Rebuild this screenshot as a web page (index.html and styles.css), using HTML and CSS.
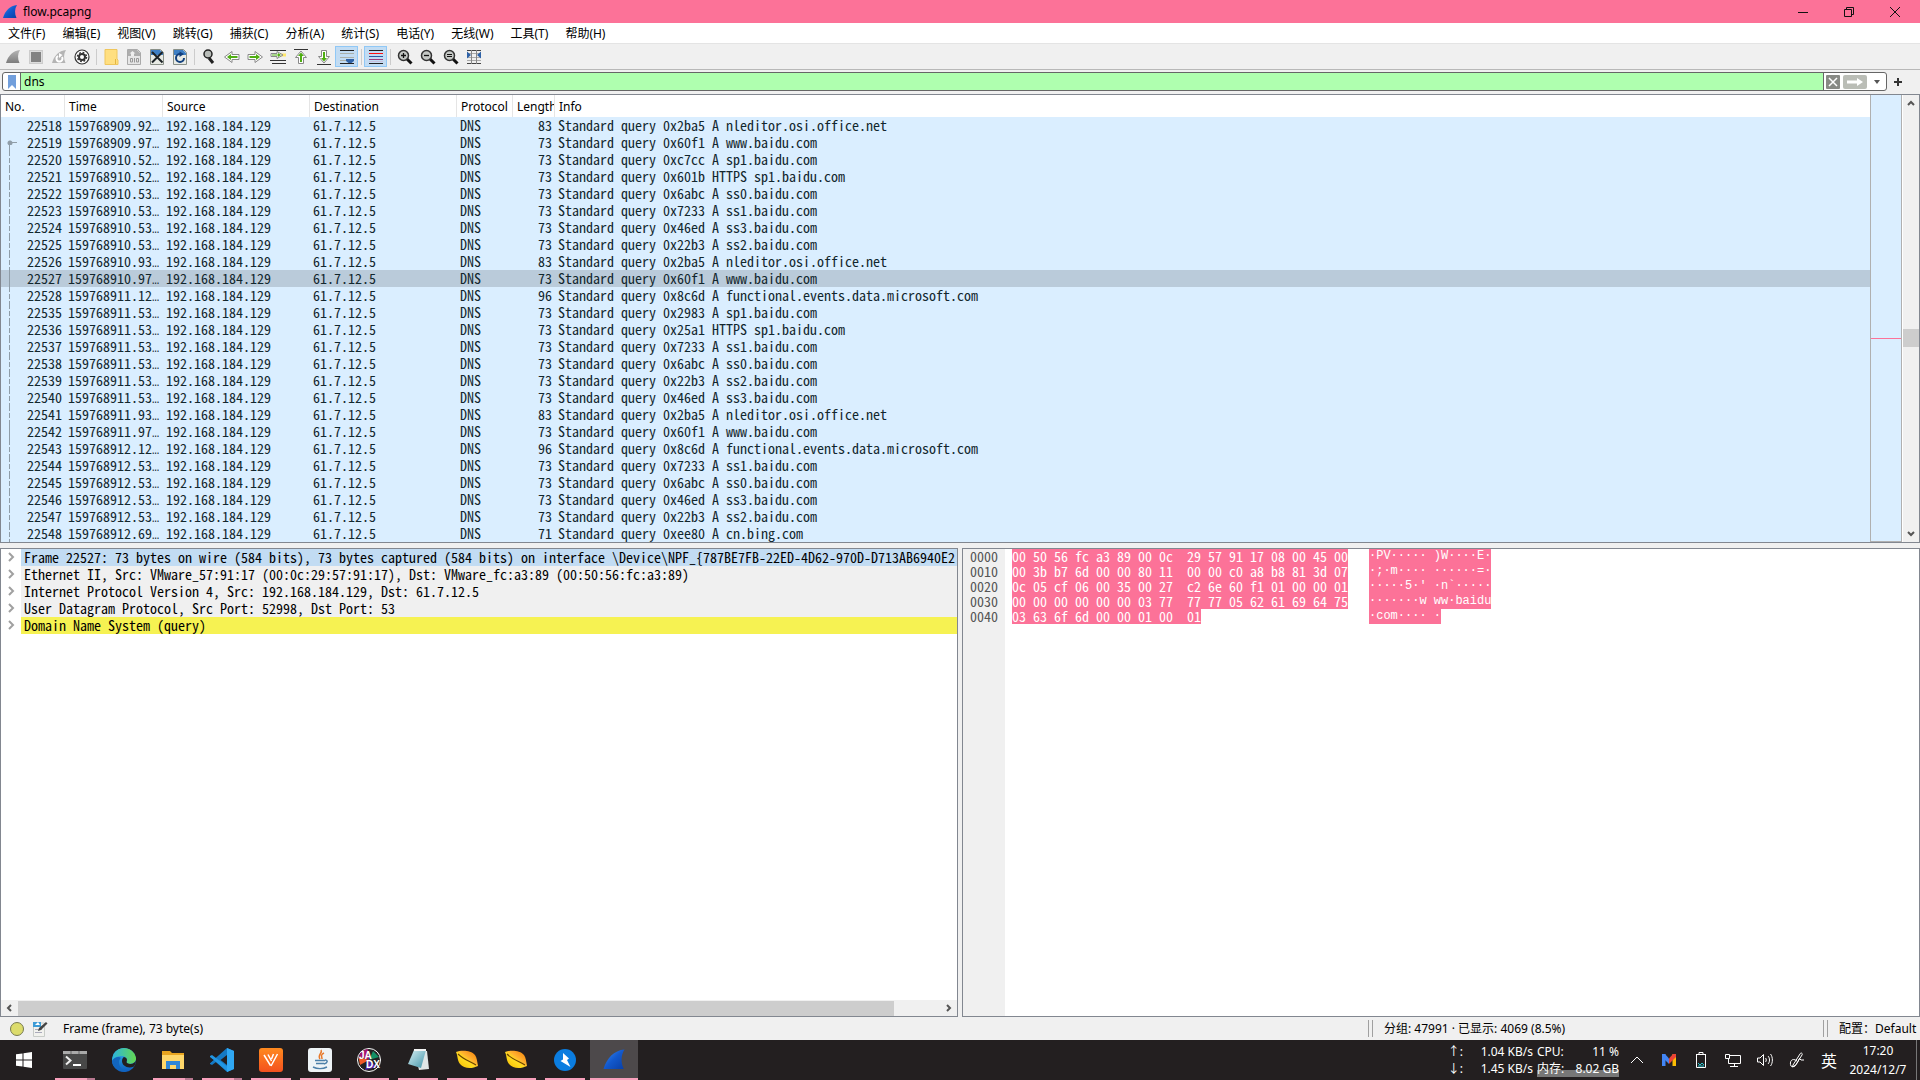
FILE: index.html
```html
<!DOCTYPE html>
<html lang="zh-CN">
<head>
<meta charset="utf-8">
<title>flow.pcapng</title>
<link rel="stylesheet" href="styles.css">
</head>
<body>
<svg width="0" height="0" class="defs" aria-hidden="true">
  <defs>
    <linearGradient id="blueFin" x1="0" y1="0" x2="1" y2="1"><stop offset="0" stop-color="#3f8cf0"/><stop offset=".5" stop-color="#1258cc"/><stop offset="1" stop-color="#0a3fa4"/></linearGradient>
    <linearGradient id="greyFin" x1="0" y1="0" x2="0" y2="1"><stop offset="0" stop-color="#b5b5b5"/><stop offset="1" stop-color="#7d7d7d"/></linearGradient>
    <linearGradient id="edgeBlue" x1="0" y1="0" x2="0" y2="1"><stop offset="0" stop-color="#35b8e8"/><stop offset="1" stop-color="#0d5cc0"/></linearGradient>
    <linearGradient id="edgeGreen" x1="0" y1="0" x2="1" y2="0"><stop offset="0" stop-color="#2ab5e0"/><stop offset="1" stop-color="#65d84f"/></linearGradient>
    <linearGradient id="orange" x1="0" y1="0" x2="0" y2="1"><stop offset="0" stop-color="#ff8a1f"/><stop offset="1" stop-color="#f4511e"/></linearGradient>
    <linearGradient id="leaf" x1="1" y1="0" x2="0" y2="1"><stop offset="0" stop-color="#f07800"/><stop offset=".4" stop-color="#ffb030"/><stop offset=".55" stop-color="#ffdc20"/><stop offset="1" stop-color="#f5b800"/></linearGradient>
    <linearGradient id="glass" x1="0" y1="0" x2="1" y2="1"><stop offset="0" stop-color="#d8f0f4"/><stop offset="1" stop-color="#3f93a8"/></linearGradient>
    <symbol id="fin" viewBox="0 0 16 16"><path d="M1 14C3 7 8 1.500 15 1C12.500 5 12.500 9.500 14.500 14Z" /></symbol>
    <symbol id="leafIcon" viewBox="0 0 24 24"><path d="M1 4C6 2 16 2 20 7C22 10 22 13 23 18C17 21 9 21 5 16C2 12 3 8 1 4Z" fill="url(#leaf)"/><path d="M3 6C8 11 14 13 21 17" fill="none" stroke="#6a4300" stroke-width="1.200"/></symbol>
    <symbol id="arrowR" viewBox="0 0 16 16"><path d="M1 5.500H8V2.500L15.500 8L8 13.500V10.500H1Z" fill="#fff" stroke="#888" stroke-width="1"/><path d="M2.500 7H9V5L13 8L9 11V9H2.500Z" fill="#4fae12"/></symbol>
    <symbol id="lens" viewBox="0 0 16 16"><path d="M10 10L14.500 14.500" stroke="#111" stroke-width="3"/><circle cx="6.500" cy="6.500" r="5" fill="#c5c8c5" stroke="#333" stroke-width="1.500"/></symbol>
  </defs>
</svg>
<div class="app">
  <header class="titlebar">
    <svg class="i16" viewBox="0 0 16 16"><use href="#fin" fill="url(#blueFin)"/></svg>
    <h1>flow.pcapng</h1>
    <div class="window-buttons">
      <button aria-label="最小化"><svg class="i10" viewBox="0 0 10 10"><path d="M0 5.500H10"/></svg></button>
      <button aria-label="还原"><svg class="i10" viewBox="0 0 10 10"><path d="M.5 2.500H7.500V9.500H.5ZM2.500 2.500V.5H9.500V7.500H7.500"/></svg></button>
      <button aria-label="关闭"><svg class="i10" viewBox="0 0 10 10"><path d="M0 0L10 10M10 0L0 10"/></svg></button>
    </div>
  </header>
  <nav class="menubar">
    <button>文件(F)</button><button>编辑(E)</button><button>视图(V)</button><button>跳转(G)</button><button>捕获(C)</button><button>分析(A)</button><button>统计(S)</button><button>电话(Y)</button><button>无线(W)</button><button>工具(T)</button><button>帮助(H)</button>
  </nav>
  <div class="toolbar">
    <button aria-label="开始捕获"><svg class="i16" viewBox="0 0 16 16"><use href="#fin" fill="url(#greyFin)"/></svg></button>
    <button aria-label="停止捕获"><svg class="i16" viewBox="0 0 16 16"><rect x="1.500" y="1.500" width="13" height="13" fill="#ddd" stroke="#ccc"/><rect x="3" y="3" width="10" height="10" fill="#828282"/></svg></button>
    <button aria-label="重新开始"><svg class="i16" viewBox="0 0 16 16"><use href="#fin" fill="#b4b4b4"/><path d="M7 7A3 3 0 1 0 11 8" fill="none" stroke="#fff" stroke-width="2"/><path d="M8 4V9L11.500 6Z" fill="#fff"/></svg></button>
    <button aria-label="捕获选项"><svg class="i16" viewBox="0 0 16 16"><circle cx="8" cy="8" r="7" fill="#fff" stroke="#333" stroke-width="1.200"/><circle cx="8" cy="8" r="3" fill="none" stroke="#333" stroke-width="2"/><circle cx="8" cy="8" r="4.500" fill="none" stroke="#333" stroke-width="1.500" stroke-dasharray="1.770 1.770"/></svg></button>
    <i class="sep"></i>
    <button aria-label="打开"><svg class="i16" viewBox="0 0 16 16"><path d="M2 .5H14V10L15 11V15.500H2Z" fill="#ffdf80" stroke="#efc65c"/><path d="M12.500 10V15" stroke="#e4b740"/></svg></button>
    <button aria-label="保存"><svg class="i16" viewBox="0 0 16 16"><path d="M1.500 .5H11.500L14.500 3.500V15.500H1.500Z" fill="#e6e6e6" stroke="#aaa"/><path d="M2 1H11L14 4V7H2Z" fill="#adadad"/><path d="M5 7V4.500H3.500L6.500 2L9.500 4.500H8V7Z" fill="#eee"/><path d="M4.500 9.500H6.500V13H4.500ZM8.500 9V13.500M10.500 9.500H12.500V13H10.500Z" fill="none" stroke="#999"/></svg></button>
    <button aria-label="关闭文件"><svg class="i16" viewBox="0 0 16 16"><path d="M1.500 .5H11.500L14.500 3.500V15.500H1.500Z" fill="#e8ebe5" stroke="#8a9088"/><path d="M2 1H11L14 4V6H2Z" fill="#3e7fc4"/><path d="M3 3L13.500 13.500M13.500 3L3 13.500" stroke="#1c2226" stroke-width="2"/></svg></button>
    <button aria-label="重新加载"><svg class="i16" viewBox="0 0 16 16"><path d="M1.500 .5H11.500L14.500 3.500V15.500H1.500Z" fill="#e8ebe5" stroke="#8a9088"/><path d="M2 1H11L14 4V6H2Z" fill="#3e7fc4"/><path d="M8 5A4 4 0 1 0 12 9" fill="none" stroke="#123f7c" stroke-width="2"/><path d="M7.500 2.500L12 5L7.500 8Z" fill="#123f7c"/></svg></button>
    <i class="sep"></i>
    <button aria-label="查找"><svg class="i16" viewBox="0 0 16 16"><path d="M8 9L12 14" stroke="#222" stroke-width="3"/><circle cx="7" cy="5" r="4" fill="#b9bdb9" stroke="#222" stroke-width="1.500"/></svg></button>
    <button aria-label="后退"><svg class="i16 flip" viewBox="0 0 16 16"><use href="#arrowR"/></svg></button>
    <button aria-label="前进"><svg class="i16" viewBox="0 0 16 16"><use href="#arrowR"/></svg></button>
    <button aria-label="转到分组"><svg class="i16" viewBox="0 0 16 16"><path d="M0 1.500H16M0 11.500H16M2 14.500H16" stroke="#333"/><path d="M11 4.500H16V7.500H11" fill="#ffe76a"/><path d="M1 4.500H7V2.500L13 6L7 9.500V7.500H1Z" fill="#fff" stroke="#888"/><path d="M2 5.500H8V4L11 6L8 8V6.500H2Z" fill="#4fae12"/></svg></button>
    <button aria-label="首个分组"><svg class="i16" viewBox="0 0 16 16"><path d="M1 .5H15" stroke="#333"/><path d="M5.500 14.500V8.500H2.500L8 2L13.500 8.500H10.500V14.500Z" fill="#fff" stroke="#888"/><path d="M7 13V7H5L8 3.500L11 7H9V13Z" fill="#4fae12"/></svg></button>
    <button aria-label="最新分组"><svg class="i16" viewBox="0 0 16 16"><path d="M1 15.500H15" stroke="#333"/><path d="M5.500 1.500V7.500H2.500L8 14L13.500 7.500H10.500V1.500Z" fill="#fff" stroke="#888"/><path d="M7 3V9H5L8 12.500L11 9H9V3Z" fill="#4fae12"/></svg></button>
    <button class="on" aria-label="自动滚动"><svg class="i16" viewBox="0 0 16 16"><path d="M1 1.500H15M1 14.500H15" stroke="#222"/><path d="M1 4.500H15M1 8.500H15M1 11.500H8" stroke="#aab0aa"/><path d="M7 10H15V12L12.500 14H9.500L7 12Z" fill="#2e62a8"/></svg></button>
    <i class="sep"></i>
    <button class="on" aria-label="着色"><svg class="i16" viewBox="0 0 16 16"><path d="M1 1.500H15M1 14.500H15" stroke="#222"/><path d="M1 4.500H15" stroke="#ff1010"/><path d="M1 7.500H15" stroke="#2c5aa0"/><path d="M1 10.500H15" stroke="#9a3f7b"/><path d="M1 12.500H15" stroke="#c9c0dc"/></svg></button>
    <i class="sep"></i>
    <button aria-label="放大"><svg class="i16" viewBox="0 0 16 16"><use href="#lens"/><path d="M4 6.500H9M6.500 4V9" stroke="#111" stroke-width="1.300"/></svg></button>
    <button aria-label="缩小"><svg class="i16" viewBox="0 0 16 16"><use href="#lens"/><path d="M4 6.500H9" stroke="#111" stroke-width="1.300"/></svg></button>
    <button aria-label="原始大小"><svg class="i16" viewBox="0 0 16 16"><use href="#lens"/><path d="M4 5.500H9M4 7.500H9" stroke="#111"/></svg></button>
    <button aria-label="调整列宽"><svg class="i16" viewBox="0 0 16 16"><path d="M1 1.500H15M1 14.500H15" stroke="#444" stroke-dasharray="4 1"/><path d="M1 4.500H15M1 8.500H15M1 11.500H15" stroke="#aaa"/><path d="M5.500 1V15M10.500 1V15" stroke="#888"/><path d="M1 2.500L5 6L1 9.500ZM15 2.500L11 6L15 9.500Z" fill="#2e62a8"/></svg></button>
  </div>
  <div class="filterbar">
    <div class="filterbox">
      <button class="bookmark" aria-label="书签"><svg width="10" height="14" viewBox="0 0 10 14"><path d="M1 0H9V14L5 10L1 14Z" fill="#729fdc"/></svg></button>
      <input type="text" value="dns" aria-label="显示过滤器">
      <button class="clear" aria-label="清除"><svg width="14" height="14" viewBox="0 0 14 14"><rect width="14" height="14" rx="1" fill="#888a85"/><path d="M3 3L11 11M11 3L3 11" stroke="#fff" stroke-width="1.500"/></svg></button>
      <button class="apply" aria-label="应用"><svg width="24" height="14" viewBox="0 0 24 14"><rect width="24" height="14" rx="2" fill="#babdb6"/><path d="M4 5.500H14V3L20 7L14 11V8.500H4Z" fill="#fff"/></svg></button>
      <button class="drop" aria-label="历史"><svg width="6" height="4" viewBox="0 0 6 4"><path d="M0 0H6L3 4Z" fill="#555"/></svg></button>
    </div>
    <button class="plus" aria-label="添加"><svg width="8" height="8" viewBox="0 0 8 8"><path d="M0 4H8M4 0V8" stroke="#333" stroke-width="2"/></svg></button>
  </div>
  <main class="panes">
    <section class="packets frame">
      <div class="list">
        <table>
          <colgroup><col class="c-no"><col class="c-time"><col class="c-addr"><col class="c-addr"><col class="c-proto"><col class="c-len"><col></colgroup>
          <thead><tr><th>No.</th><th>Time</th><th>Source</th><th>Destination</th><th>Protocol</th><th>Length</th><th>Info</th></tr></thead>
          <tbody>
            <tr><td>22518</td><td>159768909.92<span>…</span></td><td>192.168.184.129</td><td>61.7.12.5</td><td>DNS</td><td>83</td><td>Standard query 0x2ba5 A nleditor.osi.office.net</td></tr>
            <tr class="first"><td>22519</td><td>159768909.97<span>…</span></td><td>192.168.184.129</td><td>61.7.12.5</td><td>DNS</td><td>73</td><td>Standard query 0x60f1 A www.baidu.com</td></tr>
            <tr class="rel"><td>22520</td><td>159768910.52<span>…</span></td><td>192.168.184.129</td><td>61.7.12.5</td><td>DNS</td><td>73</td><td>Standard query 0xc7cc A sp1.baidu.com</td></tr>
            <tr class="rel"><td>22521</td><td>159768910.52<span>…</span></td><td>192.168.184.129</td><td>61.7.12.5</td><td>DNS</td><td>73</td><td>Standard query 0x601b HTTPS sp1.baidu.com</td></tr>
            <tr class="rel"><td>22522</td><td>159768910.53<span>…</span></td><td>192.168.184.129</td><td>61.7.12.5</td><td>DNS</td><td>73</td><td>Standard query 0x6abc A ss0.baidu.com</td></tr>
            <tr class="rel"><td>22523</td><td>159768910.53<span>…</span></td><td>192.168.184.129</td><td>61.7.12.5</td><td>DNS</td><td>73</td><td>Standard query 0x7233 A ss1.baidu.com</td></tr>
            <tr class="rel"><td>22524</td><td>159768910.53<span>…</span></td><td>192.168.184.129</td><td>61.7.12.5</td><td>DNS</td><td>73</td><td>Standard query 0x46ed A ss3.baidu.com</td></tr>
            <tr class="rel"><td>22525</td><td>159768910.53<span>…</span></td><td>192.168.184.129</td><td>61.7.12.5</td><td>DNS</td><td>73</td><td>Standard query 0x22b3 A ss2.baidu.com</td></tr>
            <tr class="rel"><td>22526</td><td>159768910.93<span>…</span></td><td>192.168.184.129</td><td>61.7.12.5</td><td>DNS</td><td>83</td><td>Standard query 0x2ba5 A nleditor.osi.office.net</td></tr>
            <tr class="same selected"><td>22527</td><td>159768910.97<span>…</span></td><td>192.168.184.129</td><td>61.7.12.5</td><td>DNS</td><td>73</td><td>Standard query 0x60f1 A www.baidu.com</td></tr>
            <tr class="rel"><td>22528</td><td>159768911.12<span>…</span></td><td>192.168.184.129</td><td>61.7.12.5</td><td>DNS</td><td>96</td><td>Standard query 0x8c6d A functional.events.data.microsoft.com</td></tr>
            <tr class="rel"><td>22535</td><td>159768911.53<span>…</span></td><td>192.168.184.129</td><td>61.7.12.5</td><td>DNS</td><td>73</td><td>Standard query 0x2983 A sp1.baidu.com</td></tr>
            <tr class="rel"><td>22536</td><td>159768911.53<span>…</span></td><td>192.168.184.129</td><td>61.7.12.5</td><td>DNS</td><td>73</td><td>Standard query 0x25a1 HTTPS sp1.baidu.com</td></tr>
            <tr class="rel"><td>22537</td><td>159768911.53<span>…</span></td><td>192.168.184.129</td><td>61.7.12.5</td><td>DNS</td><td>73</td><td>Standard query 0x7233 A ss1.baidu.com</td></tr>
            <tr class="rel"><td>22538</td><td>159768911.53<span>…</span></td><td>192.168.184.129</td><td>61.7.12.5</td><td>DNS</td><td>73</td><td>Standard query 0x6abc A ss0.baidu.com</td></tr>
            <tr class="rel"><td>22539</td><td>159768911.53<span>…</span></td><td>192.168.184.129</td><td>61.7.12.5</td><td>DNS</td><td>73</td><td>Standard query 0x22b3 A ss2.baidu.com</td></tr>
            <tr class="rel"><td>22540</td><td>159768911.53<span>…</span></td><td>192.168.184.129</td><td>61.7.12.5</td><td>DNS</td><td>73</td><td>Standard query 0x46ed A ss3.baidu.com</td></tr>
            <tr class="rel"><td>22541</td><td>159768911.93<span>…</span></td><td>192.168.184.129</td><td>61.7.12.5</td><td>DNS</td><td>83</td><td>Standard query 0x2ba5 A nleditor.osi.office.net</td></tr>
            <tr class="same"><td>22542</td><td>159768911.97<span>…</span></td><td>192.168.184.129</td><td>61.7.12.5</td><td>DNS</td><td>73</td><td>Standard query 0x60f1 A www.baidu.com</td></tr>
            <tr class="rel"><td>22543</td><td>159768912.12<span>…</span></td><td>192.168.184.129</td><td>61.7.12.5</td><td>DNS</td><td>96</td><td>Standard query 0x8c6d A functional.events.data.microsoft.com</td></tr>
            <tr class="rel"><td>22544</td><td>159768912.53<span>…</span></td><td>192.168.184.129</td><td>61.7.12.5</td><td>DNS</td><td>73</td><td>Standard query 0x7233 A ss1.baidu.com</td></tr>
            <tr class="rel"><td>22545</td><td>159768912.53<span>…</span></td><td>192.168.184.129</td><td>61.7.12.5</td><td>DNS</td><td>73</td><td>Standard query 0x6abc A ss0.baidu.com</td></tr>
            <tr class="rel"><td>22546</td><td>159768912.53<span>…</span></td><td>192.168.184.129</td><td>61.7.12.5</td><td>DNS</td><td>73</td><td>Standard query 0x46ed A ss3.baidu.com</td></tr>
            <tr class="rel"><td>22547</td><td>159768912.53<span>…</span></td><td>192.168.184.129</td><td>61.7.12.5</td><td>DNS</td><td>73</td><td>Standard query 0x22b3 A ss2.baidu.com</td></tr>
            <tr class="rel"><td>22548</td><td>159768912.69<span>…</span></td><td>192.168.184.129</td><td>61.7.12.5</td><td>DNS</td><td>71</td><td>Standard query 0xee80 A cn.bing.com</td></tr>
          </tbody>
        </table>
      </div>
      <div class="minimap"><i></i></div>
      <div class="vscroll">
        <svg width="8" height="6" viewBox="0 0 8 6"><path d="M1 5L4 2L7 5"/></svg>
        <div class="vtrack"><i></i></div>
        <svg width="8" height="6" viewBox="0 0 8 6"><path d="M1 1L4 4L7 1"/></svg>
      </div>
    </section>
    <div class="lower">
      <section class="details frame">
        <ul>
          <li class="current"><svg width="20" height="10" viewBox="0 0 20 10"><path d="M8 1L12 5L8 9"/></svg><span>Frame 22527: 73 bytes on wire (584 bits), 73 bytes captured (584 bits) on interface \Device\NPF_{787BE7FB-22ED-4D62-970D-D713AB6940E2</span></li>
          <li><svg width="20" height="10" viewBox="0 0 20 10"><path d="M8 1L12 5L8 9"/></svg><span>Ethernet II, Src: VMware_57:91:17 (00:0c:29:57:91:17), Dst: VMware_fc:a3:89 (00:50:56:fc:a3:89)</span></li>
          <li><svg width="20" height="10" viewBox="0 0 20 10"><path d="M8 1L12 5L8 9"/></svg><span>Internet Protocol Version 4, Src: 192.168.184.129, Dst: 61.7.12.5</span></li>
          <li><svg width="20" height="10" viewBox="0 0 20 10"><path d="M8 1L12 5L8 9"/></svg><span>User Datagram Protocol, Src Port: 52998, Dst Port: 53</span></li>
          <li class="match"><svg width="20" height="10" viewBox="0 0 20 10"><path d="M8 1L12 5L8 9"/></svg><span>Domain Name System (query)</span></li>
        </ul>
        <div class="hscroll">
          <svg width="6" height="8" viewBox="0 0 6 8"><path d="M5 1L2 4L5 7"/></svg>
          <div class="htrack"><i></i></div>
          <svg width="6" height="8" viewBox="0 0 6 8"><path d="M1 1L4 4L1 7"/></svg>
        </div>
      </section>
      <section class="bytes frame">
        <pre class="offsets">0000
0010
0020
0030
0040</pre>
        <pre class="hex"><mark>00 50 56 fc a3 89 00 0c  29 57 91 17 08 00 45 00</mark>
<mark>00 3b b7 6d 00 00 80 11  00 00 c0 a8 b8 81 3d 07</mark>
<mark>0c 05 cf 06 00 35 00 27  c2 6e 60 f1 01 00 00 01</mark>
<mark>00 00 00 00 00 00 03 77  77 77 05 62 61 69 64 75</mark>
<mark>03 63 6f 6d 00 00 01 00  01</mark></pre>
        <pre class="ascii"><mark>·PV····· )W····E·</mark>
<mark>·;·m···· ······=·</mark>
<mark>·····5·' ·n`·····</mark>
<mark>·······w ww·baidu</mark>
<mark>·com···· ·</mark></pre>
      </section>
    </div>
  </main>
  <footer class="status">
    <div class="st-left">
      <svg class="i16" viewBox="0 0 16 16"><circle cx="8" cy="8" r="6.500" fill="#dcdc6c" stroke="#777a50"/></svg>
      <svg class="i16" viewBox="0 0 16 16"><path d="M1.500 2H12.500V15.500H1.500Z" fill="#f2f2ee" stroke="#c8ccc8"/><path d="M1 1H9V6H1Z" fill="#3d9bd6"/><path d="M3 4L6 1L8 4" fill="#fff"/><path d="M3 8.500H10M3 11.500H10" stroke="#aab"/><path d="M6 10L7 7L14 1L15.500 2.500L9 9Z" fill="#444"/></svg>
      <span>Frame (frame), 73 byte(s)</span>
    </div>
    <div class="st-mid">分组: 47991 · 已显示: 4069 (8.5%)</div>
    <div class="st-right">配置：Default</div>
  </footer>
  <div class="taskbar">
    <button aria-label="开始"><svg width="16" height="16" viewBox="0 0 16 16"><path d="M0 2.300L6.500 1.400V7.500H0ZM7.500 1.200L16 0V7.500H7.500ZM0 8.500H6.500V14.600L0 13.700ZM7.500 8.500H16V16L7.500 14.800Z" fill="#fff"/></svg></button>
    <button class="run multi" aria-label="终端"><svg class="i24" viewBox="0 0 24 24"><rect y="3" width="24" height="18" rx="1" fill="#484848"/><path d="M0 3H24V6H0Z" fill="#a9a9a9"/><path d="M8 3V6M16 3V6" stroke="#666"/><path d="M3 8.500L7.500 12.500L3 16.500" fill="none" stroke="#eee" stroke-width="2"/><path d="M10 17H18" stroke="#fff" stroke-width="2"/></svg></button>
    <button aria-label="Edge"><svg class="i24" viewBox="0 0 24 24"><circle cx="12" cy="12" r="12" fill="url(#edgeBlue)"/><path d="M1 8C4-2 21-3 24 10C24.500 16 17 17 14.500 15C16 13 15 8 10 8C5 8 2 10 0 13Z" fill="url(#edgeGreen)"/><path d="M15 15C19 17 23 15.500 24 12C24 15 23 17 22 18.500C16 21 10 18 10 13C10 11 11 9.500 12 9C16 10 15 13 14.500 14Z" fill="#231f20"/><path d="M9 10C5 13 7 22 15 23.500C9 25 0 20 0 13C2 9 7 8 9 10Z" fill="#1265bd"/></svg></button>
    <button class="run multi" aria-label="文件资源管理器"><svg class="i24" viewBox="0 0 24 24"><path d="M1 3H9L11 5H23V21H1Z" fill="#e9a520"/><path d="M1 7H23V21H1Z" fill="#ffd76a"/><path d="M5 13H19V21H15V17H9V21H5Z" fill="#2f87d8"/></svg></button>
    <button class="run multi" aria-label="Visual Studio Code"><svg class="i24" viewBox="0 0 24 24"><path d="M17 0L24 3V21L17 24L6 14L2 17L0 16V15L17 0" fill="#1479c4"/><path d="M0 8L2 7L18 19V24L0 9Z" fill="#2196e3"/><path d="M17 0L24 3V21L17 24Z" fill="#30a8f3"/><path d="M17 7V17L10.500 12Z" fill="#231f20"/><path d="M0 10L3.500 12L0 15Z" fill="#231f20"/></svg></button>
    <button class="run" aria-label="Yakit"><svg class="i24" viewBox="0 0 24 24"><rect width="24" height="24" rx="3" fill="url(#orange)"/><path d="M5 7L11.500 17.500M9 6.500L12.500 13M18.500 6L12 18M14.500 6L12.500 11" fill="none" stroke="#fff" stroke-width="1.500"/></svg></button>
    <button class="run" aria-label="Java"><svg class="i24" viewBox="0 0 24 24"><rect width="24" height="24" rx="3" fill="#eef3f6"/><path d="M13 2C15 5 9 7 12 11M16 5C12 7 14 8 14 11" fill="none" stroke="#e8792b" stroke-width="1.500"/><path d="M7 12.500H17M8 15.500H16M5 19C9 21 15 21 19 19M17 12C20 12 20 15 16 16" fill="none" stroke="#4c7fa8" stroke-width="1.500"/></svg></button>
    <button class="run" aria-label="JADX"><svg class="i24" viewBox="0 0 24 24"><circle cx="12" cy="12" r="11.500" fill="#222" stroke="#fff"/><path d="M12 12L2 8A11 11 0 0 1 11 1Z" fill="#a3146f"/><path d="M12 12L1.500 9L3 17Z" fill="#ef5a28"/><path d="M12 12L16 3L22 9Z" fill="#139065"/><path d="M12 12L8 22L20 19Z" fill="#5025a8"/><text x="2" y="11" class="logo-text">JA</text><text x="9" y="20" class="logo-text">DX</text></svg></button>
    <button class="run" aria-label="记事本"><svg class="i24" viewBox="0 0 24 24"><path d="M8 2L21 3L23 21L13 22Z" fill="#dfe6e6"/><path d="M8 2L20 2L15 20L2 16Z" fill="url(#glass)"/><path d="M8 2H20" stroke="#f4f4f4" stroke-width="2"/></svg></button>
    <button class="run" aria-label="010 Editor"><svg class="i24" viewBox="0 0 24 24"><use href="#leafIcon"/></svg></button>
    <button class="run" aria-label="010 Editor 2"><svg class="i24" viewBox="0 0 24 24"><use href="#leafIcon"/></svg></button>
    <button class="run" aria-label="下载"><svg class="i24" viewBox="0 0 24 24"><circle cx="12" cy="12" r="11" fill="#0b7de0"/><path d="M10 5L16 10.500L14 12L17.500 19L7.500 13L10 11.500Z" fill="#fff"/></svg></button>
    <button class="run active" aria-label="Wireshark"><svg class="i24" viewBox="0 0 16 16"><use href="#fin" fill="url(#blueFin)"/></svg></button>
    <div class="tray">
      <div class="net"><span>↑:</span><span>1.04 KB/s</span><span>↓:</span><span>1.45 KB/s</span></div>
      <div class="load"><div><span>CPU:</span><span>11 %</span></div><div class="mem"><span>内存:</span><span>8.02 GB</span></div></div>
      <button aria-label="显示隐藏的图标"><svg class="i16" viewBox="0 0 16 16"><path d="M2 11L8 5L14 11"/></svg></button>
      <button aria-label="邮件"><svg class="i16" viewBox="0 0 16 16"><path d="M1 2H4.500V14H1Z" fill="#4285f4" stroke="none"/><path d="M11.500 2H15V14H11.500Z" fill="#fbbc04" stroke="none"/><path d="M8 6.500L12 2H15V5L8 12Z" fill="#ea4335" stroke="none"/><path d="M1 2H4L8 6.500V12L1 5Z" fill="#4285f4" stroke="none"/></svg></button>
      <button aria-label="清理"><svg class="i16" viewBox="0 0 16 16"><path d="M6 2V.5H10V2M3 2.500H13M3.500 3V15.500H12.500V3"/><path d="M5 11L7 13L9 11L11 13M5 14H11" stroke="#28c5d0"/></svg></button>
      <button aria-label="网络"><svg class="i16" viewBox="0 0 16 16"><path d="M5 3.500H15.500V11.500H3.500V6.500M.5 2.500H4.500V6.500H.5ZM9.500 11.500V14.500M5 14.500H13"/></svg></button>
      <button aria-label="音量"><svg class="i16" viewBox="0 0 16 16"><path d="M.5 6H3L6.500 2.500V13.500L3 10H.5ZM8.500 6C9.500 7 9.500 9 8.500 10M11 4C13 6 13 10 11 12M13.500 2C16 5 16 11 13.500 14"/></svg></button>
      <button aria-label="手写笔"><svg class="i16" viewBox="0 0 16 16"><path d="M4 13L11 2C12 0 14 1.500 13 3L6 14L3.500 15ZM10 6L12 8H15M8 9C3 5 0 10 2 14C4 16 8 13 10 7"/></svg></button>
      <button class="ime">英</button>
      <button class="clock"><span>17:20</span><span>2024/12/7</span></button>
    </div>
  </div>
</div>
</body>
</html>
```
FILE: styles.css
```css
* { box-sizing: border-box; }
body { margin: 0; font-family: "Noto Sans", "Noto Sans CJK SC", sans-serif; font-size: 12px; color: #000; }
button { border: 0; padding: 0; margin: 0; background: none; font: inherit; color: inherit; display: flex; align-items: center; justify-content: center; }
svg { flex: none; display: block; }
.defs { position: absolute; }
.i10 { width: 10px; height: 10px; }
.i16 { width: 16px; height: 16px; }
.i24 { width: 24px; height: 24px; }
.flip { transform: scaleX(-1); }

.app { display: flex; flex-direction: column; height: 100vh; background: #f0f0f0; overflow: hidden; }

.titlebar { display: flex; align-items: center; height: 23px; background: #fc7298; padding-left: 2px; gap: 5px; flex: none; }
.titlebar h1 { font-size: 12px; font-weight: 400; margin: 0; }
.window-buttons { margin-left: auto; padding-right: 2px; display: flex; }
.window-buttons button { width: 46px; height: 20px; }
.window-buttons path { fill: none; stroke: #111; }

.menubar { display: flex; gap: 1px; height: 21px; background: #fff; border-bottom: 1px solid #e4e4e4; flex: none; }
.menubar button { padding: 0 8px; white-space: nowrap; }

.toolbar { display: flex; align-items: center; height: 26px; padding-left: 1px; border-bottom: 1px solid #b8b8b8; flex: none; }
.toolbar button { width: 23px; height: 21px; }
.toolbar .on { background: #c2dcf3; border: 1px solid #90c8f6; }
.sep { width: 1px; height: 16px; margin: 0 2px 0 3px; background: #ccc; }

.filterbar { display: flex; align-items: center; height: 24px; padding: 0 1px 1px 2px; margin-bottom: 0; background: #f0f0f0; flex: none; }
.filterbox { flex: 1; display: flex; height: 19px; background: #fff; border: 1px solid #666; border-radius: 3px; overflow: hidden; }
.bookmark { width: 17px; }
.filterbox input { flex: 1; min-width: 0; border: 0; border-left: 1px solid #666; border-right: 1px solid #666; background: #afffaf; padding: 0 3px; font: inherit; outline: 0; }
.clear { width: 18px; }
.apply { width: 26px; }
.drop { width: 18px; }
.plus { width: 21px; margin-right: 11px; height: 19px; }

.panes { flex: 1; min-height: 0; display: flex; flex-direction: column; gap: 5px; }
.frame { border: 1px solid #828790; background: #fff; overflow: hidden; }
.packets { flex: 448 1 0; min-height: 0; display: flex; }
.list { flex: 1; overflow: hidden; background: #daeeff; }
table { width: 100%; table-layout: fixed; border-collapse: separate; border-spacing: 0; }
.c-no { width: 64px; }
.c-time { width: 98px; }
.c-addr { width: 147px; }
.c-proto { width: 56px; }
.c-len { width: 42px; }
th { height: 22px; padding: 0 0 0 4px; background: #fff; border-right: 1px solid #e5e5e5; font-weight: 400; text-align: left; white-space: nowrap; overflow: hidden; }
th:last-child { border-right: 0; }
td { height: 17px; line-height: 17px; padding: 0 0 0 3px; white-space: pre; color: #12272e; }
td, .details, pre { font-family: "Noto Sans Mono CJK SC", "Liberation Mono", monospace; font-size: 14px; }
td span { font-family: "Liberation Mono", monospace; font-size: 12px; line-height: 12px; }
td:first-child { position: relative; text-align: right; padding-right: 3px; }
td:nth-child(6) { text-align: right; padding-right: 3px; }
.selected td { background: #bacbda; }
.rel td:first-child::before, .same td:first-child::before, .first td:first-child::before { content: ""; position: absolute; left: 8px; top: 0; bottom: 0; width: 1px; background: #8f9da8; }
.rel td:first-child::before { background: repeating-linear-gradient(#8f9da8 0 5px, transparent 5px 7px); }
.first td:first-child::before { top: 8px; }
.first td:first-child::after { content: ""; position: absolute; left: 6px; top: 6px; width: 10px; height: 5px; background: radial-gradient(circle at 3px 3px, #8f9da8 2px, transparent 3px), linear-gradient(#8f9da8, #8f9da8) 3px 2px / 7px 1px no-repeat; }

.minimap { width: 32px; background: #daeeff; border: 1px solid #b0b0b0; border-top: 0; display: flex; flex-direction: column; }
.minimap::before { content: ""; flex: 243; }
.minimap::after { content: ""; flex: 202; }
.minimap i { height: 1px; background: #fc7298; }
.vscroll { width: 17px; padding: 5px 0; border-left: 1px solid #fff; background: #f0f0f0; display: flex; flex-direction: column; align-items: center; }
.vscroll path, .hscroll path { fill: none; stroke: #555; stroke-width: 2; }
.vtrack { flex: 1; width: 16px; display: flex; flex-direction: column; }
.vtrack::before { content: ""; flex: 224; }
.vtrack::after { content: ""; flex: 184; }
.vtrack i { height: 18px; background: #cdcdcd; }

.lower { flex: 471 1 0; min-height: 0; display: grid; grid-template-columns: 1fr 1fr; gap: 4px; }
.details { display: flex; flex-direction: column; min-width: 0; }
.details ul { list-style: none; margin: 0; padding: 0; flex: 1; }
.details li { display: flex; align-items: center; height: 17px; line-height: 17px; }
.details li path { fill: none; stroke: #a0a0a0; stroke-width: 2; }
.details li span { flex: 1; min-width: 0; padding-left: 3px; background: #f0f0f0; white-space: pre; overflow-x: clip; }
.details .current span { background: #c2dcf3; }
.details .match span { background: #f6f252; }
.hscroll { display: flex; align-items: center; height: 16px; padding: 0 5px; gap: 6px; background: #f0f0f0; }
.htrack { flex: 1; height: 15px; }
.htrack i { display: block; width: 95%; height: 15px; background: #cdcdcd; }

.bytes { display: flex; min-width: 0; }
pre { margin: 0; line-height: 15px; }
.offsets { width: 42px; padding-left: 7px; background: #f0f0f0; color: #555; }
.hex { padding-left: 7px; width: 364px; }
.ascii { font-family: "Liberation Mono", monospace; font-size: 12px; }
mark { display: inline-block; height: 15px; vertical-align: top; background: #fc7298; color: #fff; }

.status { display: flex; align-items: center; height: 23px; flex: none; white-space: nowrap; }
.st-left { flex: 1; display: flex; align-items: center; gap: 7px; padding-left: 9px; }
.st-left span { padding-left: 8px; }
.st-mid, .st-right { height: 17px; line-height: 17px; padding-left: 11px; border-left: 1px solid #a0a0a0; }
.st-mid::before, .st-right::before { content: ""; float: left; width: 1px; height: 17px; margin: 0 11px 0 -8px; background: #a0a0a0; }
.st-mid { width: 455px; }
.st-right { width: 97px; }

.taskbar { display: flex; height: 40px; background: #231f20; color: #fff; flex: none; }
.taskbar > button { width: 49px; height: 40px; padding-right: 1px; position: relative; }
.taskbar > button:first-child { margin-right: 2px; }
.run::after { content: ""; position: absolute; left: 4px; right: 5px; bottom: 0; height: 2px; background: #f8a0bc; }
.multi::after { background: linear-gradient(90deg, #f8a0bc 32px, #b87890 32px); }
.active { background: #4d494b; }
.taskbar > .active { width: 48px; padding: 0; }
.active::after { left: 0; right: 0; }
.logo-text { font: 700 10px "Liberation Sans", sans-serif; fill: #fff; }
.tray { margin-left: auto; display: flex; align-items: center; }
.tray svg { fill: none; stroke: #fff; }
.tray button { width: 32px; height: 40px; }
.net { display: grid; grid-template-columns: 16px 70px; line-height: 17px; text-align: right; white-space: nowrap; }
.load { width: 82px; margin: 0 2px 0 4px; line-height: 17px; white-space: nowrap; }
.load div { display: flex; justify-content: space-between; }
.mem { background: linear-gradient(transparent 10px, #777 10px); }
.tray .ime { font-size: 16px; width: 28px; margin-left: 2px; }
.tray .clock { width: 70px; flex-direction: column; line-height: 19px; margin-right: 3px; border-right: 0; }
.tray::after { content: ""; width: 1px; height: 40px; margin-right: 3px; background: #777; }
```
